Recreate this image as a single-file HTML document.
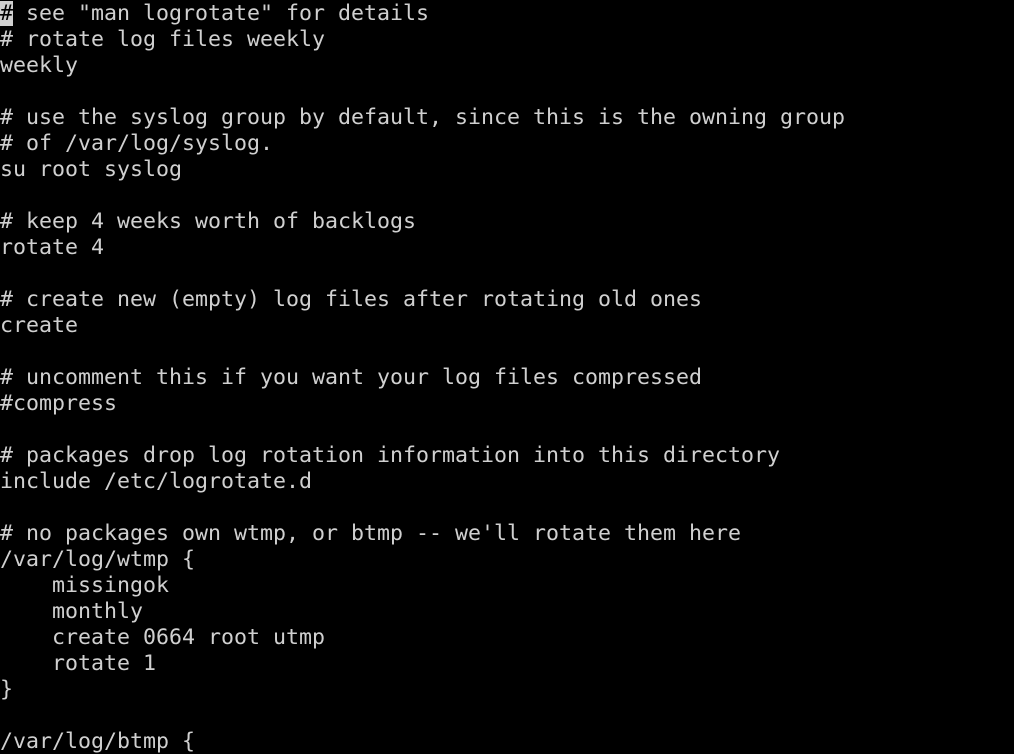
<!DOCTYPE html>
<html><head><style>
html,body{margin:0;padding:0;background:#000;width:1014px;height:754px;overflow:hidden}
pre{margin:0;padding-top:1px;font-family:"DejaVu Sans Mono","Liberation Mono",monospace;font-size:21.6px;line-height:26px;color:#d0d0d0;white-space:pre}
.c{background:#d0d0d0;color:#000}
</style></head><body><pre><span class="c">#</span> see "man logrotate" for details
# rotate log files weekly
weekly

# use the syslog group by default, since this is the owning group
# of /var/log/syslog.
su root syslog

# keep 4 weeks worth of backlogs
rotate 4

# create new (empty) log files after rotating old ones
create

# uncomment this if you want your log files compressed
#compress

# packages drop log rotation information into this directory
include /etc/logrotate.d

# no packages own wtmp, or btmp -- we'll rotate them here
/var/log/wtmp {
    missingok
    monthly
    create 0664 root utmp
    rotate 1
}

/var/log/btmp {
</pre></body></html>
